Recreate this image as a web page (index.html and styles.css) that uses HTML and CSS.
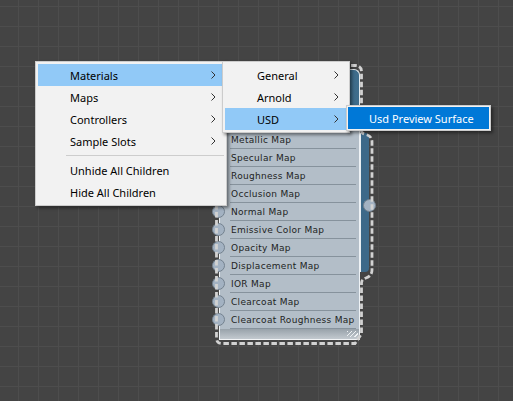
FILE: index.html
```
<!DOCTYPE html>
<html>
<head>
<meta charset="utf-8">
<link rel="stylesheet" href="styles.css">
</head>
<body>
<div class="node">
  <div class="node-head"></div>
  <div class="node-body">
    <div class="row"><span class="port"></span><span class="lbl">Metallic Map</span></div>
    <div class="row"><span class="port"></span><span class="lbl">Specular Map</span></div>
    <div class="row"><span class="port"></span><span class="lbl">Roughness Map</span></div>
    <div class="row"><span class="port"></span><span class="lbl">Occlusion Map</span></div>
    <div class="row"><span class="port"></span><span class="lbl">Normal Map</span></div>
    <div class="row"><span class="port"></span><span class="lbl">Emissive Color Map</span></div>
    <div class="row"><span class="port"></span><span class="lbl">Opacity Map</span></div>
    <div class="row"><span class="port"></span><span class="lbl">Displacement Map</span></div>
    <div class="row"><span class="port"></span><span class="lbl">IOR Map</span></div>
    <div class="row"><span class="port"></span><span class="lbl">Clearcoat Map</span></div>
    <div class="row"><span class="port"></span><span class="lbl">Clearcoat Roughness Map</span></div>
  </div>
  <div class="node-foot"><span class="grip"></span></div>
  <div class="out-strip"><span class="port out"></span></div>
  <svg class="sel" width="175" height="300" viewBox="210 56 175 300">
    <path d="M223,65.5 L355,65.5 Q361.5,65.5 361.5,72 L361.5,131 Q361.5,133.5 366,134.5 Q372,136 372,142 L372,270 Q372,276 366,278 Q361.5,279.5 361.5,283 L361.5,334 L355,343.5 L222,343.5 Q216.5,343.5 216.5,338 L216.5,72 Q216.5,65.5 223,65.5 Z" fill="none" stroke="#d2d2d2" stroke-width="2.8" stroke-dasharray="5.5 2.5"/>
  </svg>
</div>

<div class="menu m1">
  <div class="item hot"><span class="txt">Materials</span><svg class="chev" width="5" height="8" viewBox="0 0 5 8"><path d="M0.5 0.5 L4 4 L0.5 7.5" fill="none" stroke="#333" stroke-width="1"/></svg></div>
  <div class="item"><span class="txt">Maps</span><svg class="chev" width="5" height="8" viewBox="0 0 5 8"><path d="M0.5 0.5 L4 4 L0.5 7.5" fill="none" stroke="#333" stroke-width="1"/></svg></div>
  <div class="item"><span class="txt">Controllers</span><svg class="chev" width="5" height="8" viewBox="0 0 5 8"><path d="M0.5 0.5 L4 4 L0.5 7.5" fill="none" stroke="#333" stroke-width="1"/></svg></div>
  <div class="item"><span class="txt">Sample Slots</span><svg class="chev" width="5" height="8" viewBox="0 0 5 8"><path d="M0.5 0.5 L4 4 L0.5 7.5" fill="none" stroke="#333" stroke-width="1"/></svg></div>
  <div class="sep"></div>
  <div class="item"><span class="txt">Unhide All Children</span></div>
  <div class="item"><span class="txt">Hide All Children</span></div>
</div>

<div class="menu m2">
  <div class="item"><span class="txt">General</span><svg class="chev" width="5" height="8" viewBox="0 0 5 8"><path d="M0.5 0.5 L4 4 L0.5 7.5" fill="none" stroke="#333" stroke-width="1"/></svg></div>
  <div class="item"><span class="txt">Arnold</span><svg class="chev" width="5" height="8" viewBox="0 0 5 8"><path d="M0.5 0.5 L4 4 L0.5 7.5" fill="none" stroke="#333" stroke-width="1"/></svg></div>
  <div class="item hot"><span class="txt">USD</span><svg class="chev" width="5" height="8" viewBox="0 0 5 8"><path d="M0.5 0.5 L4 4 L0.5 7.5" fill="none" stroke="#333" stroke-width="1"/></svg></div>
</div>

<div class="menu m3">
  <div class="item sel-item"><span class="txt">Usd Preview Surface</span></div>
</div>
</body>
</html>
```

FILE: styles.css
```
html, body {
  margin: 0;
  padding: 0;
}
body {
  width: 513px;
  height: 401px;
  overflow: hidden;
  position: relative;
  background-color: #444444;
  background-image:
    linear-gradient(to right, #4d4d4d 1px, transparent 1px),
    linear-gradient(to bottom, #4d4d4d 1px, transparent 1px);
  background-size: 20px 20px;
  background-position: 18px 6px;
}

/* ---------- node ---------- */
.node {
  position: absolute;
  left: 219px;
  top: 69px;
  width: 141px;
}
.node-head {
  height: 62px;
  box-sizing: border-box;
  background: linear-gradient(to right, #2d5470, #3f6d8c);
  border: 1px solid #e4eaee;
  border-bottom: none;
  border-radius: 0 6px 0 0;
}
.node-body {
  position: relative;
  background: #b3bec8;
  border-left: 1px solid #eef2f5;
  border-right: 1px solid #eef2f5;
}
.row {
  position: relative;
  height: 18px;
}
.lbl {
  display: block;
  height: 18px;
  box-sizing: border-box;
  margin: 0 3px 0 10px;
  padding-left: 1px;
  border-bottom: 1px solid #86929c;
  font-family: "DejaVu Sans", sans-serif;
  font-size: 9px;
  letter-spacing: 0.3px;
  line-height: 18px;
  color: #1e1e1e;
  white-space: nowrap;
}
.port {
  position: absolute;
  left: -8px;
  top: 2px;
  width: 13px;
  height: 13px;
  box-sizing: border-box;
  border-radius: 50%;
  background: #a3b2c2;
  border: 1px solid #74828f;
}
.node-foot {
  position: relative;
  height: 10px;
  background: linear-gradient(to bottom, #98a2aa, #c2c9cf);
  border-left: 1px solid #eef2f5;
  border-right: 1px solid #eef2f5;
  border-bottom: 1px solid #f2f4f6;
}
.grip {
  position: absolute;
  right: 1px;
  top: 2px;
  width: 11px;
  height: 6px;
  background: repeating-linear-gradient(135deg, #eef1f3 0 1px, transparent 1px 3px);
}
.out-strip {
  position: absolute;
  left: 141px;
  top: 64px;
  width: 8px;
  height: 139px;
  background: #3d6989;
  border-left: 1px solid #e8eef2;
  border-radius: 0 4px 4px 0;
}
.port.out {
  left: 2px;
  top: 66px;
}
.sel {
  position: absolute;
  left: -9px;
  top: -13px;
  pointer-events: none;
}

/* ---------- menus ---------- */
.menu {
  position: absolute;
  box-sizing: border-box;
  background: #f2f2f2;
  border: 1px solid #cccccc;
  padding: 2px;
  box-shadow: 2px 2px 3px rgba(0, 0, 0, 0.45);
  font-family: "Noto Sans", "Open Sans", sans-serif;
  font-size: 11px;
  color: #000;
}
.m1 {
  left: 35px;
  top: 61px;
  width: 192px;
}
.m2 {
  left: 222px;
  top: 61px;
  width: 128px;
}
.m3 {
  left: 346px;
  top: 105px;
  width: 145px;
  padding: 1px;
}
.item {
  display: flex;
  align-items: center;
  height: 22px;
}
.item .txt {
  flex: 1;
  padding-left: 32px;
  white-space: nowrap;
}
.item.hot {
  background: #91c9f7;
}
.chev {
  margin-right: 8px;
  display: block;
}
.sep {
  height: 1px;
  background: #cdcdcd;
  margin: 3px 0 3px 28px;
}
.sel-item {
  background: #0078d7;
  color: #ffffff;
}
.sel-item .txt {
  padding-left: 21px;
}
```
